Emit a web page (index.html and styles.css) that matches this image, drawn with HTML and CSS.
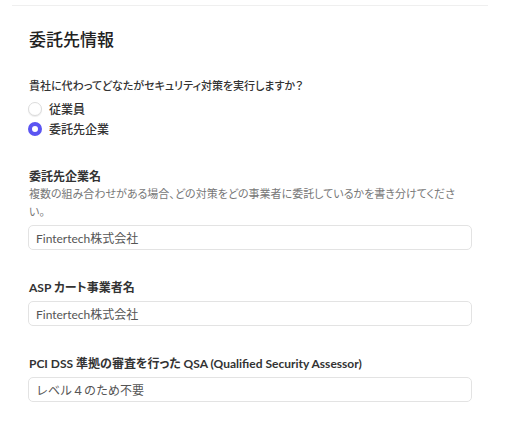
FILE: index.html
```html
<!DOCTYPE html>
<html lang="ja">
<head>
    <meta charset="UTF-8">
    <meta name="viewport" content="width=device-width, initial-scale=1.0">
    <title>委託先情報</title>
    <link rel="stylesheet" href="styles.css">
</head>
<body>
    <div class="top-edge"></div>

    <section class="section">
        <h2>委託先情報</h2>

        <div class="question">貴社に代わってどなたがセキュリティ対策を実行しますか？</div>
        <label class="radio-row">
            <input type="radio" name="executor" value="employee">
            <span>従業員</span>
        </label>
        <label class="radio-row">
            <input type="radio" name="executor" value="contractor" checked>
            <span>委託先企業</span>
        </label>

        <div class="field">
            <div class="field-label">委託先企業名</div>
            <div class="field-help">複数の組み合わせがある場合、どの対策をどの事業者に委託しているかを書き分けてください。</div>
            <input class="text-input" type="text" value="Fintertech株式会社">
        </div>

        <div class="field">
            <div class="field-label">ASP カート事業者名</div>
            <input class="text-input" type="text" value="Fintertech株式会社">
        </div>

        <div class="field">
            <div class="field-label">PCI DSS 準拠の審査を行った QSA (Qualified Security Assessor)</div>
            <input class="text-input" type="text" value="レベル４のため不要">
        </div>
    </section>
</body>
</html>
```

FILE: styles.css
```css
body {
    font-family: "Open Sans", "Noto Sans CJK JP", sans-serif;
    font-feature-settings: "palt";
    margin: 0;
    background-color: #fff;
    color: #333;
}

.top-edge {
    width: 476px;
    height: 5px;
    margin-left: 12px;
    border-bottom: 1px solid #efefef;
}

.section {
    padding: 0 51px 0 28px;
}

h2 {
    margin: 22px 0 0 1px;
    font-size: 17px;
    line-height: 24px;
    font-weight: 500;
    color: #222;
}

.question {
    margin: 25px 0 4px 1px;
    font-size: 11px;
    line-height: 18px;
    font-weight: 500;
    color: #333;
}

.radio-row {
    display: flex;
    align-items: center;
    gap: 7px;
    height: 20px;
    font-size: 12px;
    font-weight: 500;
    color: #333;
}

.radio-row input {
    appearance: none;
    width: 14px;
    height: 14px;
    margin: 0;
    border-radius: 50%;
    border: 1px solid #dcdcdc;
    box-shadow: 0 1px 1px rgba(0, 0, 0, 0.08);
    background-color: #fff;
}

.radio-row input:checked {
    border: 4px solid #5b55f2;
    box-shadow: none;
}

.field {
    margin-top: 30px;
}

.field-label {
    margin-left: 1px;
    font-family: "Lato", "Noto Sans CJK JP", sans-serif;
    font-size: 12px;
    line-height: 16px;
    font-weight: 700;
    color: #333;
}

.field-help {
    max-width: 430px;
    margin: 0 0 -1px 1px;
    font-size: 11px;
    line-height: 18px;
    color: #777;
}

.text-input {
    display: block;
    box-sizing: border-box;
    width: 100%;
    height: 25px;
    margin-top: 5px;
    padding: 0 7px;
    font-family: "Lato", "Noto Sans CJK JP", sans-serif;
    font-size: 12px;
    color: #555;
    border: 1px solid #e3e3e3;
    border-radius: 5px;
    background-color: #fff;
    outline: none;
}
```
